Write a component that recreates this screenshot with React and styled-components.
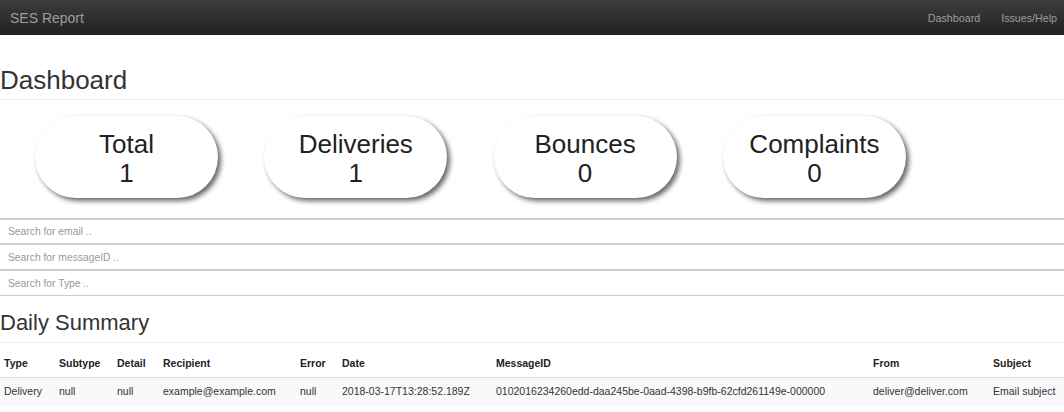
import React from 'react';
import styled, { createGlobalStyle } from 'styled-components';

const GlobalStyle = createGlobalStyle`
	body {
		margin: 0;
		font-family: "Liberation Sans", Arial, sans-serif;
		color: #333333;
		background: #ffffff;
	}
`;

const Navbar = styled.div`
	height: 35px;
	display: flex;
	align-items: center;
	justify-content: space-between;
	background: linear-gradient(to bottom, #3c3c3c 0%, #222222 100%);
	padding: 0 7px 0 10px;
`;

const Brand = styled.div`
	font-size: 14px;
	color: #9d9d9d;
	padding-top: 1px;
`;

const NavLinks = styled.div`
	display: flex;
	gap: 21px;
`;

const NavLink = styled.a`
	font-size: 10.7px;
	color: #9d9d9d;
	text-decoration: none;
`;

const PageHeader = styled.h1`
	margin: 0;
	padding: 31px 0 5px;
	font-size: 26px;
	font-weight: 400;
	line-height: 28px;
	border-bottom: 1px solid #eeeeee;
`;

const PillRow = styled.div`
	display: flex;
	gap: 46.3px;
	padding: 16px 0 20px 35px;
`;

const Pill = styled.div`
	width: 183px;
	height: 82px;
	border-radius: 41px;
	background: #ffffff;
	box-shadow: 3px 3px 5px rgba(0, 0, 0, 0.6);
	display: flex;
	flex-direction: column;
	align-items: center;
	justify-content: center;
	font-size: 26px;
	line-height: 29px;
	color: #222222;
	padding-top: 3px;
	box-sizing: border-box;
`;

const SearchInput = styled.input`
	display: block;
	width: 100%;
	box-sizing: border-box;
	height: ${(p) => (p.$tall ? '26px' : p.$last ? '27px' : '25px')};
	margin: 0;
	border: none;
	border-top: 2px solid #cccccc;
	border-bottom: ${(p) => (p.$last ? '1px solid #cccccc' : 'none')};
	padding: 0 8px;
	font-family: "Liberation Sans", Arial, sans-serif;
	font-size: 10.3px;
	color: #555555;
	outline: none;
	&::placeholder {
		color: #999999;
	}
`;

const SectionTitle = styled.h2`
	margin: 0;
	padding: 14px 0 7px;
	font-size: 22px;
	font-weight: 400;
	line-height: 25px;
	border-bottom: 1px solid #eeeeee;
`;

const Table = styled.table`
	width: 100%;
	border-collapse: collapse;
	table-layout: fixed;
	margin-top: 9px;
	font-size: 10.5px;
`;

const Th = styled.th`
	text-align: left;
	font-weight: 700;
	padding: 5px 4px 8px;
	color: #222222;
	border-bottom: 1px solid #dddddd;
	white-space: nowrap;
`;

const Td = styled.td`
	padding: 7px 4px 9px;
	background: #f9f9f9;
	color: #333333;
	white-space: nowrap;
`;

const columns = [
	['Type', 55],
	['Subtype', 58],
	['Detail', 46],
	['Recipient', 137],
	['Error', 42],
	['Date', 154],
	['MessageID', 377],
	['From', 120],
	['Subject', 75],
];

const rows = [
	[
		'Delivery',
		'null',
		'null',
		'example@example.com',
		'null',
		'2018-03-17T13:28:52.189Z',
		'0102016234260edd-daa245be-0aad-4398-b9fb-62cfd261149e-000000',
		'deliver@deliver.com',
		'Email subject',
	],
];

const stats = [
	['Total', 1],
	['Deliveries', 1],
	['Bounces', 0],
	['Complaints', 0],
];

export default function App() {
	return (
		<>
			<GlobalStyle />
			<Navbar>
				<Brand>SES Report</Brand>
				<NavLinks>
					<NavLink href="#">Dashboard</NavLink>
					<NavLink href="#">Issues/Help</NavLink>
				</NavLinks>
			</Navbar>
			<PageHeader>Dashboard</PageHeader>
			<PillRow>
				{stats.map(([label, value]) => (
					<Pill key={label}>
						<div>{label}</div>
						<div>{value}</div>
					</Pill>
				))}
			</PillRow>
			<div>
				<SearchInput placeholder="Search for email .." />
				<SearchInput $tall placeholder="Search for messageID .." />
				<SearchInput $last placeholder="Search for Type .." />
			</div>
			<SectionTitle>Daily Summary</SectionTitle>
			<Table>
				<colgroup>
					{columns.map(([name, w]) => (
						<col key={name} style={{ width: w }} />
					))}
				</colgroup>
				<thead>
					<tr>
						{columns.map(([name]) => (
							<Th key={name}>{name}</Th>
						))}
					</tr>
				</thead>
				<tbody>
					{rows.map((r, i) => (
						<tr key={i}>
							{r.map((c, j) => (
								<Td key={j}>{c}</Td>
							))}
						</tr>
					))}
				</tbody>
			</Table>
		</>
	);
}
